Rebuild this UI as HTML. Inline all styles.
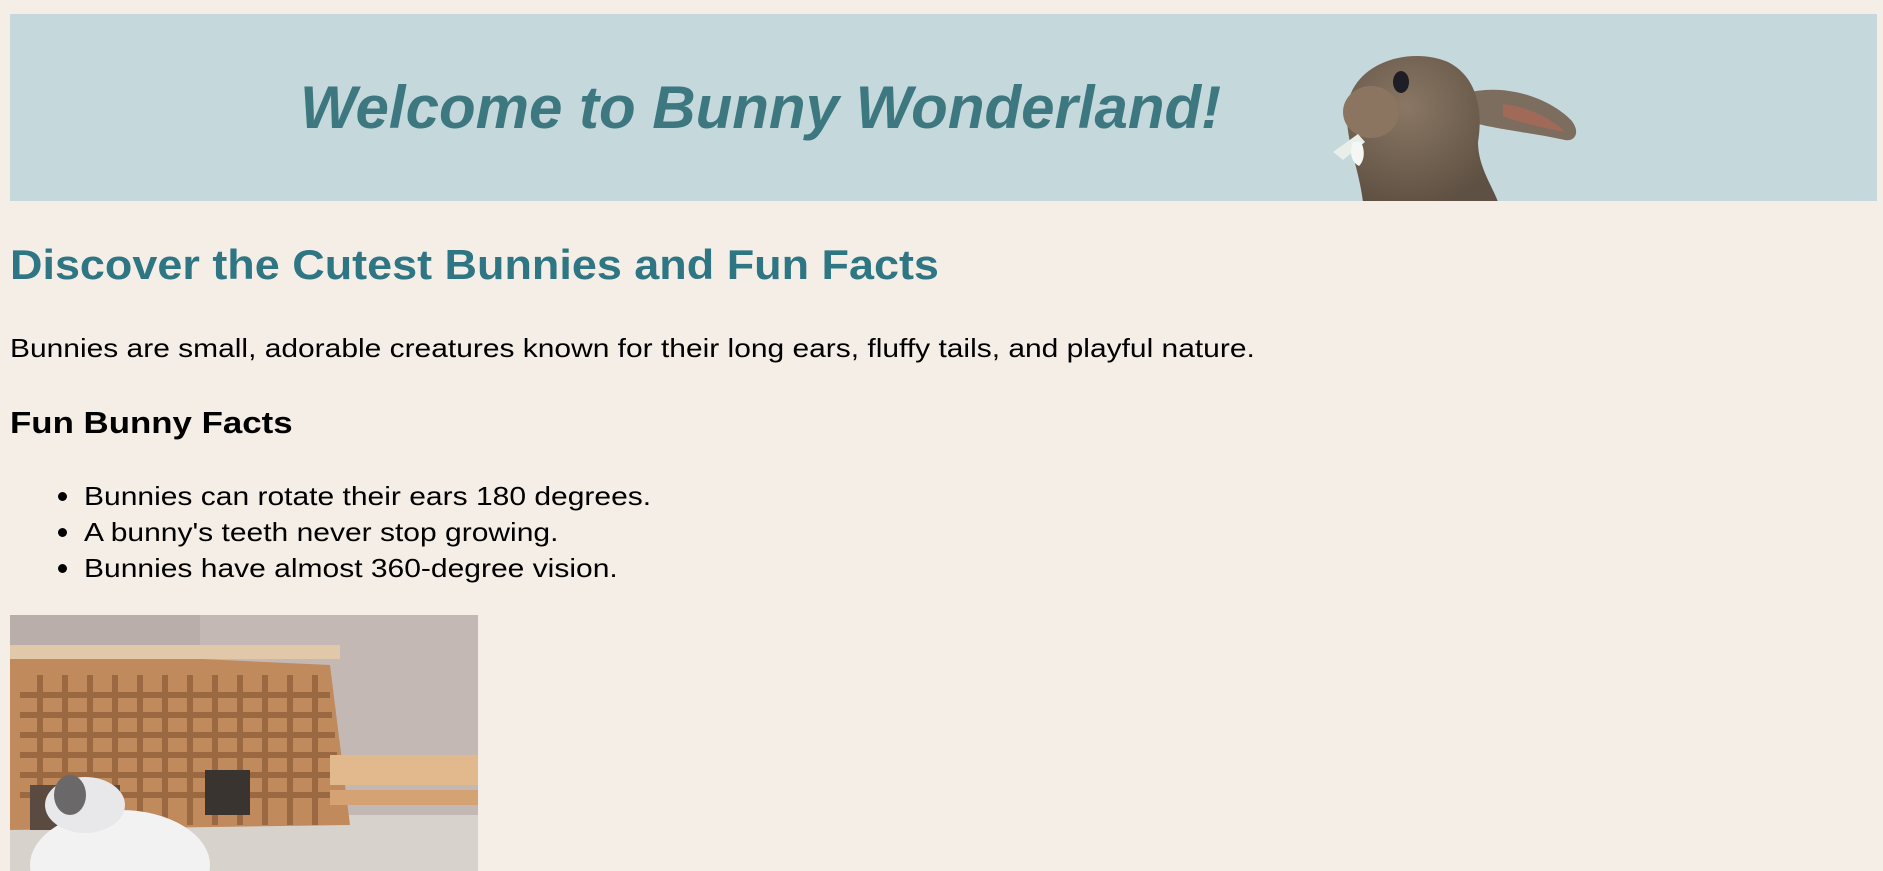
<!DOCTYPE html>
<html><head><meta charset="utf-8"><style>
html,body{overflow:hidden}
body{margin:0;background:#f5eee7;width:1883px;height:871px;position:relative;font-family:"Liberation Sans",Arial,sans-serif;color:#000}
.a{position:absolute;white-space:nowrap;margin:0;transform-origin:0 0}
#ban{left:10px;top:14px;width:1867px;height:187px;background:#c5d8dc;position:absolute;overflow:hidden}
</style></head><body>
<div id="ban">
<div class="a" style="left:290px;top:58px;font-size:60px;font-weight:bold;font-style:italic;color:#3d7880;line-height:72px">Welcome to Bunny Wonderland!</div>
<svg class="a" style="left:1293px;top:28px" width="290" height="160" viewBox="0 0 290 160">
<defs><radialGradient id="f" cx="0.4" cy="0.35" r="0.7"><stop offset="0" stop-color="#8a7764"/><stop offset="1" stop-color="#5e5042"/></radialGradient></defs>
<path d="M160 52 C200 40 245 55 268 78 C278 90 272 100 262 98 C235 92 200 88 175 82 Z" fill="#7d6d5f"/>
<path d="M200 62 C230 66 250 78 262 90 C240 86 215 80 200 74Z" fill="#b06a55" opacity="0.7"/>
<path d="M60 160 C55 120 40 95 45 60 C55 18 110 5 145 20 C175 35 180 70 175 100 C175 125 190 145 195 160 Z" fill="url(#f)"/>
<ellipse cx="68" cy="70" rx="28" ry="26" fill="#8c7560"/>
<ellipse cx="98" cy="40" rx="8" ry="11" fill="#1e1e26"/>
<path d="M30 110 L55 92 L62 100 L40 118Z" fill="#e8eee8"/>
<path d="M50 100 C46 110 48 120 56 124 C62 118 62 108 58 100Z" fill="#f4f7f4"/>
</svg>
</div>
<h2 class="a" style="left:10px;top:240px;font-size:42px;line-height:50px;color:#2e7683;font-weight:bold;transform:scaleX(1.07)">Discover the Cutest Bunnies and Fun Facts</h2>
<p class="a" style="left:10px;top:331px;font-size:26px;line-height:34px;transform:scaleX(1.152)">Bunnies are small, adorable creatures known for their long ears, fluffy tails, and playful nature.</p>
<h3 class="a" style="left:10px;top:404px;font-size:31px;line-height:38px;font-weight:bold;transform:scaleX(1.124)">Fun Bunny Facts</h3>
<div class="a" style="left:84px;top:478px;font-size:26px;line-height:36px;transform:scaleX(1.154)">Bunnies can rotate their ears 180 degrees.<br>A bunny's teeth never stop growing.<br>Bunnies have almost 360-degree vision.</div>
<div class="a" style="left:58px;top:492px;width:9px;height:9px;border-radius:50%;background:#000"></div>
<div class="a" style="left:58px;top:528px;width:9px;height:9px;border-radius:50%;background:#000"></div>
<div class="a" style="left:58px;top:564px;width:9px;height:9px;border-radius:50%;background:#000"></div>
<svg class="a" style="left:10px;top:615px" width="468" height="256" viewBox="0 0 468 256">
<rect width="468" height="256" fill="#b9aea9"/>
<rect x="190" y="0" width="278" height="256" fill="#c4b8b4"/>
<rect x="0" y="200" width="468" height="56" fill="#d8d2cc"/>
<path d="M0 35 L320 50 L340 210 L0 215Z" fill="#c08a5c"/>
<g stroke="#8a5a36" stroke-width="6" opacity="0.7">
<path d="M10 80 H320 M10 100 H322 M10 120 H325 M10 140 H327 M10 160 H330 M10 180 H332"/>
<path d="M30 60 V210 M55 60 V210 M80 60 V210 M105 60 V210 M130 60 V210 M155 60 V210 M180 60 V210 M205 60 V210 M230 60 V210 M255 60 V210 M280 60 V210 M305 60 V210"/>
</g>
<rect x="0" y="30" width="330" height="14" fill="#e0c8a8"/>
<rect x="20" y="170" width="90" height="45" fill="#5a4a40"/>
<rect x="195" y="155" width="45" height="45" fill="#3a3431"/>
<path d="M320 140 H468 V170 H320Z" fill="#e2b98d"/>
<path d="M320 175 H468 V190 H320Z" fill="#d4a273"/>
<ellipse cx="110" cy="250" rx="90" ry="55" fill="#f3f2f2"/>
<ellipse cx="75" cy="190" rx="40" ry="28" fill="#e8e8ea"/>
<ellipse cx="60" cy="180" rx="16" ry="20" fill="#6a6868"/>
</svg>
</body></html>
